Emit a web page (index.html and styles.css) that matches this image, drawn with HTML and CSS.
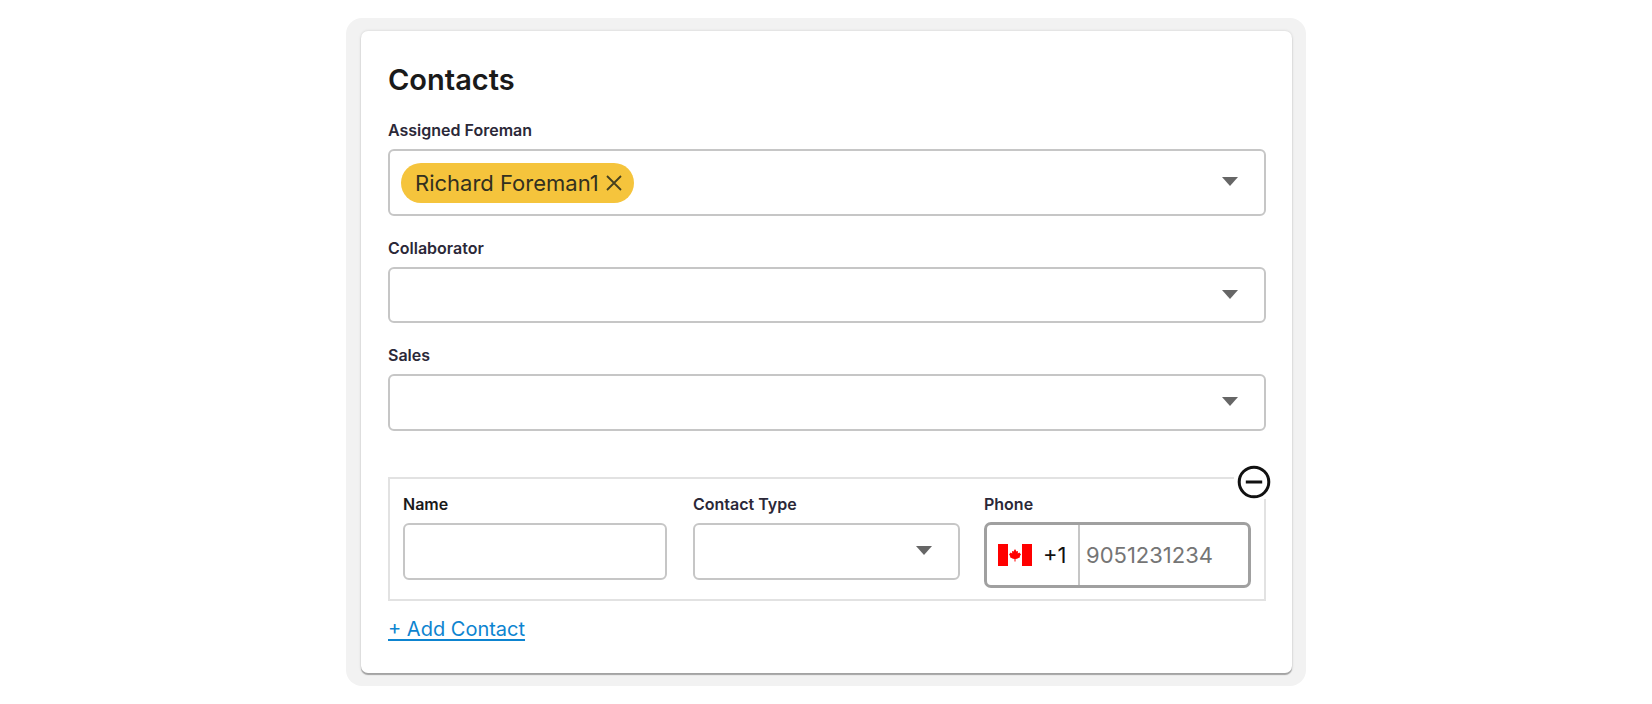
FILE: index.html
```
<!DOCTYPE html>
<html>
	<head>
		<meta charset="UTF-8">
		<title>Contacts</title>
		<link rel="stylesheet" href="styles.css">
	</head>
	<body>
		<div class="wrap">
			<div class="card">
				<h2 class="title">Contacts</h2>

				<div class="field">
					<span class="label foreman">Assigned Foreman</span>
					<div class="select tall">
						<div class="chip">
							<span>Richard Foreman1</span>
							<svg width="16" height="16" viewBox="0 0 16 16"><path d="M1 1L15 15M15 1L1 15"/></svg>
						</div>
						<svg class="caret" width="16" height="9" viewBox="0 0 16 9"><path d="M0 0H16L8 9Z"/></svg>
					</div>
				</div>

				<div class="field">
					<span class="label">Collaborator</span>
					<div class="select short">
						<svg class="caret" width="16" height="9" viewBox="0 0 16 9"><path d="M0 0H16L8 9Z"/></svg>
					</div>
				</div>

				<div class="field">
					<span class="label">Sales</span>
					<div class="select">
						<svg class="caret" width="16" height="9" viewBox="0 0 16 9"><path d="M0 0H16L8 9Z"/></svg>
					</div>
				</div>

				<div class="contact">
					<div class="col">
						<span class="label black">Name</span>
						<div class="select"></div>
					</div>
					<div class="col type">
						<span class="label">Contact Type</span>
						<div class="select">
							<svg class="caret" width="16" height="9" viewBox="0 0 16 9"><path d="M0 0H16L8 9Z"/></svg>
						</div>
					</div>
					<div class="col tel">
						<span class="label">Phone</span>
						<div class="phone">
							<div class="code">
								<svg width="34" height="22" viewBox="0 0 34 22">
									<path fill="#fff" d="M0 0H34V22H0Z"/>
									<path fill="#f00" d="M0 0H10V22H0ZM24 0H34V22H24Z"/>
									<path fill="#f00" d="M17 5L18.5 7.5L20 7L19.8 9.5L21.3 8.6L23 10.5L21.8 12L22 13.2L19 14.8L17.5 15V17.5H16.5V15L15 14.8L12 13.2L12.2 12L11 10.5L12.7 8.6L14.2 9.5L14 7L15.5 7.5Z"/>
								</svg>
								<span>+1</span>
							</div>
							<span class="num">9051231234</span>
						</div>
					</div>
					<!-- remove button -->
					<div class="remove">
						<svg width="34" height="34" viewBox="0 0 34 34"><circle cx="17" cy="17" r="14.8"/><path d="M8.8 17H25.2"/></svg>
					</div>
				</div>

				<a class="add" href="#">+ Add Contact</a>
			</div>
		</div>
	</body>
</html>
```
FILE: styles.css
```
*{margin: 0;padding: 0;box-sizing: border-box;}
body{
	background: #fff;
	font-family: Inter, "Liberation Sans", sans-serif;
	color: #1a1a1a;
}
svg{
	display: block;
	flex: none;
}
.wrap{
	width: 960px;
	height: 668px;
	margin: 18px auto 0;
	padding: 13px 14px 13px 15px;
	background: #f2f2f2;
	border-radius: 16px;
}
.card{
	height: 642px;
	padding: 30px 26px 0 27px;
	background: #fff;
	border-radius: 7px;
	box-shadow: 0 2px 1px #a3a3a3, 0 0 3px rgba(0,0,0,0.15);
}
.title{
	height: 58px;
	line-height: 38px;
	font-size: 29px;
	font-weight: 600;
}
.field{
	margin-bottom: 21px;
}
.label{
	display: block;
	height: 30px;
	line-height: 22px;
	font-size: 16px;
	font-weight: 600;
	color: #2b2838;
}
.black{
	color: #1a1a1a;
}
.select{
	height: 57px;
	padding: 0 26px 0 11px;
	display: flex;
	align-items: center;
	border: 2px solid #c6c6c6;
	border-radius: 6px;
}
.tall{
	height: 67px;
}
.short{
	height: 56px;
}
.caret{
	margin-left: auto;
	margin-top: -2px;
	fill: #666;
}
.chip{
	width: 233px;
	height: 40px;
	padding: 0 12px 0 14px;
	display: flex;
	align-items: center;
	justify-content: space-between;
	background: #f5c43c;
	border-radius: 20px;
	font-size: 22px;
	color: #33301f;
	white-space: nowrap;
}
.chip svg{
	stroke: #45401f;
	stroke-width: 1.8;
}
.contact{
	height: 124px;
	margin-top: 46px;
	padding: 14px 13px 0;
	display: flex;
	position: relative;
	border: 2px solid #e2e2e2;
}
.col{
	width: 264px;
}
.type{
	width: 267px;
	margin-left: 26px;
}
.tel{
	width: 267px;
	margin-left: 24px;
}
.phone{
	height: 66px;
	margin-top: -1px;
	display: flex;
	border: 3px solid #a0a0a0;
	border-radius: 7px;
	font-size: 22px;
}
.code{
	width: 93px;
	padding-left: 11px;
	display: flex;
	align-items: center;
	gap: 11px;
	border-right: 2px solid #c6c6c6;
	color: #111;
}
.num{
	padding-left: 6px;
	line-height: 60px;
	color: #757575;
}
.remove{
	position: absolute;
	top: -14px;
	right: -7px;
	padding-left: 3px;
	background: #fff;
}
.remove svg{
	fill: none;
	stroke: #111;
	stroke-width: 3;
}
.add{
	display: inline-block;
	margin-top: 14px;
	line-height: 28px;
	font-size: 20px;
	color: #0d84d0;
	text-decoration: underline;
	text-decoration-thickness: 2px;
	text-underline-offset: 3px;
}
```
